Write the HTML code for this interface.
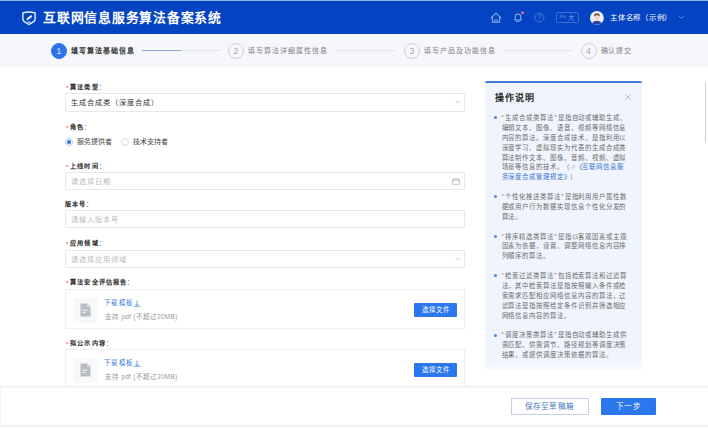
<!DOCTYPE html>
<html lang="zh-CN">
<head>
<meta charset="utf-8">
<style>
*{box-sizing:border-box;margin:0;padding:0}
html,body{width:708px;height:429px;overflow:hidden;background:#fff;font-family:"Liberation Sans",sans-serif;color:#333}
.abs{position:absolute}
#hdr{position:absolute;left:0;top:0;width:708px;height:34px;background:#0443c2;border-top:1px solid #8db6e6}
#hdr .title{position:absolute;left:43px;top:8.6px;font-size:12.8px;line-height:16px;color:#fff;font-weight:bold;letter-spacing:0.76px;white-space:nowrap}
#hdr .name{position:absolute;left:610px;top:12.2px;font-size:7.4px;line-height:10px;color:#fff;white-space:nowrap;letter-spacing:0.75px;font-weight:500}
#steps{position:absolute;left:0;top:34px;width:708px;height:33px;background:#f5f7fb}
.sc{position:absolute;top:8.5px;width:16px;height:16px;border-radius:50%;border:1px solid #d0d3d8;color:#a9a9a9;font-size:8.6px;line-height:14.5px;text-align:center}
.sc.on{background:#2d74ea;border-color:#2d74ea;color:#dfe9ff}
.sl{position:absolute;top:11.6px;font-size:7px;line-height:10px;color:#808080;white-space:nowrap;letter-spacing:0.95px;font-weight:500}
.sl.on{color:#333;font-weight:bold}
.line{position:absolute;top:16px;height:1px;background:#e3e5e9}
.lbl{position:absolute;left:65px;font-size:6.2px;line-height:9px;color:#2a2a2a;font-weight:bold;white-space:nowrap;letter-spacing:1.08px;margin-top:-0.5px}
.lbl u{text-decoration:none;font-weight:normal;color:#555}
.lbl i{font-style:normal;color:#e0403a;font-weight:normal;margin-right:0.8px;margin-left:1px;position:relative;top:1px}
.inp{position:absolute;left:65px;width:400px;height:18px;border:1px solid #e6e8eb;border-radius:1px;font-size:7.2px;line-height:17px;padding-left:4.6px;color:#333;white-space:nowrap;letter-spacing:1.05px}
.inp.ph{color:#bbb}
.inp svg{position:absolute}
.radio{position:absolute;top:137.7px;width:8px;height:8px;border-radius:50%;border:1px solid #d8dade;background:#fff}
.radio.on{border-color:#a9c6ef}
.radio.on:after{content:"";position:absolute;left:1px;top:1px;width:4px;height:4px;border-radius:50%;background:#3a70d8}
.rt{position:absolute;top:137px;font-size:7px;line-height:9px;color:#444;white-space:nowrap}
.up{position:absolute;left:65px;width:400px;border:1px solid #eceef0;overflow:hidden}
.up .ib{position:absolute;left:7px;top:8px;width:24px;height:25px;background:#f7f8fa}
.up .dl{position:absolute;left:38.2px;top:9px;font-size:6.4px;line-height:8px;color:#3b7de0;white-space:nowrap;letter-spacing:1.2px}
.up .sp{position:absolute;left:39px;top:23px;font-size:6.4px;line-height:8px;color:#999;white-space:nowrap;letter-spacing:0.3px}
.up .sp .c{letter-spacing:1.15px}
.up .btn{left:348px;top:12.5px;width:43px;height:14.5px;font-size:6.4px;line-height:14.5px;letter-spacing:1.05px;text-indent:1px}
.btn{position:absolute;background:#2b78ee;color:#fff;text-align:center;border-radius:1px;white-space:nowrap}
#help{position:absolute;left:485px;top:81px;width:157px;height:287.5px;background:linear-gradient(#f0f5fd 97%,#f6f9fe);border-top:2px solid #3e7ad6;border-radius:2px 2px 0 0}
#help .ht{position:absolute;left:9.8px;top:9px;font-size:9px;line-height:12px;font-weight:bold;color:#2e2e2e;white-space:nowrap;letter-spacing:1px}
#help ul{position:absolute;left:0;top:30px;list-style:none}
#help li{position:relative;padding-left:16.5px;width:150px;font-size:6.4px;line-height:9.88px;color:#6b6b6b;margin-bottom:9.88px;white-space:nowrap;letter-spacing:0.94px}
#help b{font-weight:normal}
#help .ql{margin-right:0.6px;margin-left:0px}
#help .qr{margin-left:0.6px;margin-right:0.2px}
#help li:before{content:"";position:absolute;left:9.2px;top:3.3px;width:3.2px;height:3.2px;border-radius:50%;background:#4a87e2}
#help a{color:#3a73d0;text-decoration:none}
#foot{position:absolute;left:0;top:386px;width:708px;height:43px;background:#fff;border-top:1px solid #ebedf0;box-shadow:0 2px 2px -1px #f6f6f6 inset}
#foot .b1{position:absolute;left:510.5px;top:10.5px;width:78px;height:17px;border:1px solid #c3cfe2;color:#4677c4;font-size:7.6px;line-height:15px;text-align:center;letter-spacing:0.3px;font-weight:500}
#foot .b2{left:601px;top:10.5px;width:55px;height:17.2px;font-size:7.6px;line-height:17.2px;letter-spacing:0.3px}
#foot .bl{position:absolute;left:0;top:37px;width:708px;height:3px;background:linear-gradient(#fdfdfd,#f5f5f5 60%,#e9e9e9)}
#foot .bl2{position:absolute;left:0;top:0;width:1px;height:39px;background:#f3f3f3}
#sb{position:absolute;left:704.5px;top:82px;width:1.6px;height:61px;background:#cfd1d4;border-radius:1px}
</style>
</head>
<body>
<div id="hdr">
  <svg class="abs" style="left:21px;top:9px" width="16" height="16" viewBox="0 0 16 16">
    <path d="M1.9 2.9 Q8 1.2 14.1 2.9 V9.6 Q14.1 11 11.6 12.3 L8 14.5 L4.4 12.3 Q1.9 11 1.9 9.6 Z" fill="none" stroke="#eef4ff" stroke-width="1.35" stroke-linejoin="round"/>
    <path d="M6.5 12 H9.5" stroke="#eef4ff" stroke-width="1"/>
    <path d="M6.6 9 L10 6.3" stroke="#e6f5ec" stroke-width="2.2" stroke-linecap="round"/>
  </svg>
  <div class="title">互联网信息服务算法备案系统</div>
  <svg class="abs" style="left:490px;top:10.8px" width="12" height="11" viewBox="0 0 12 11">
    <path d="M1 5.8 L6 1.2 L11 5.8 M2.4 4.6 V10.2 H9.6 V4.6" fill="none" stroke="#86adec" stroke-width="1.05" stroke-linejoin="round" stroke-linecap="round"/>
    <path d="M4.8 10.2 V7.8 H7.2 V10.2" fill="none" stroke="#86adec" stroke-width="0.9"/>
  </svg>
  <svg class="abs" style="left:512px;top:9.8px" width="14" height="12" viewBox="0 0 14 12">
    <path d="M2.5 9 H9.5 M3.3 9 V5.8 Q3.3 3 6 3 Q8.7 3 8.7 5.8 V9 M4.9 10.4 H7.1" fill="none" stroke="#86adec" stroke-width="1.05" stroke-linejoin="round" stroke-linecap="round"/>
    <circle cx="10.5" cy="1.7" r="1.5" fill="#d96b9a"/>
  </svg>
  <svg class="abs" style="left:534px;top:11px" width="11" height="11" viewBox="0 0 11 11">
    <circle cx="5.5" cy="5.5" r="4.4" fill="none" stroke="#4c7fd8" stroke-width="0.9"/>
    <path d="M4.1 4.3 Q4.1 2.9 5.5 2.9 Q6.9 2.9 6.9 4.2 Q6.9 5 5.5 5.6 V6.6" fill="none" stroke="#4c7fd8" stroke-width="0.9"/>
    <circle cx="5.5" cy="8" r="0.5" fill="#4c7fd8"/>
  </svg>
  <div class="abs" style="left:556px;top:11.3px;width:22.5px;height:11.2px;border:1px solid #3570d4;border-radius:1.5px"></div>
  <div class="abs" style="left:559.6px;top:12.4px;font-size:4.6px;line-height:8px;color:#4a80d8;font-weight:bold;white-space:nowrap">Aa</div>
  <div class="abs" style="left:568px;top:11.9px;font-size:6.5px;line-height:9px;color:#6f9fe8;font-weight:500;white-space:nowrap">大</div>
  <svg class="abs" style="left:590.2px;top:9.9px" width="13.8" height="13.8" viewBox="0 0 14 14">
    <defs><clipPath id="av"><circle cx="7" cy="7" r="7"/></clipPath></defs>
    <circle cx="7" cy="7" r="7" fill="#e9f5fb"/>
    <g clip-path="url(#av)">
      <path d="M1.5 14 Q2 10 7 9.8 Q12 10 12.5 14 Z" fill="#2d3fa6"/>
      <ellipse cx="7" cy="6.3" rx="3" ry="3.4" fill="#f6d7cf"/>
      <path d="M3.9 5.5 Q4 2.4 7 2.4 Q10 2.4 10.1 5.5 Q9 4.1 7 4.2 Q5 4.1 3.9 5.5 Z" fill="#6b4a3e"/>
    </g>
  </svg>
  <div class="name">主体名称（示例）</div>
  <svg class="abs" style="left:678px;top:14.2px" width="7" height="5" viewBox="0 0 7 5">
    <path d="M1 1 L3.5 3.6 L6 1" fill="none" stroke="#6b95de" stroke-width="0.9"/>
  </svg>
</div>
<div id="steps">
  <div class="sc on" style="left:51px">1</div>
  <div class="sl on" style="left:71px">填写算法基础信息</div>
  <div class="line" style="left:142px;width:79px"></div>
  <div class="line" style="left:142px;width:39px;background:#8fa9dd"></div>
  <div class="sc" style="left:228px">2</div>
  <div class="sl" style="left:248px">填写算法详细属性信息</div>
  <div class="line" style="left:334px;width:61px"></div>
  <div class="sc" style="left:404px">3</div>
  <div class="sl" style="left:424px">填写产品及功能信息</div>
  <div class="line" style="left:504px;width:68px"></div>
  <div class="sc" style="left:580.5px">4</div>
  <div class="sl" style="left:600.5px">确认提交</div>
</div>

<div class="lbl" style="top:82px"><i>*</i>算法类型<u>：</u></div>
<div class="inp" style="top:93px;height:18.6px">生成合成类（深度合成）
  <svg style="left:389px;top:6px" width="6" height="4" viewBox="0 0 6 4"><path d="M0.6 0.8 L3 3.1 L5.4 0.8" fill="none" stroke="#c4c6ca" stroke-width="0.8"/></svg>
</div>
<div class="lbl" style="top:122px"><i>*</i>角色<u>：</u></div>
<div class="radio on" style="left:65px"></div>
<div class="rt" style="left:76.5px">服务提供者</div>
<div class="radio" style="left:121px"></div>
<div class="rt" style="left:132.5px">技术支持者</div>
<div class="lbl" style="top:161px"><i>*</i>上线时间<u>：</u></div>
<div class="inp ph" style="top:172px">请选择日期
  <svg style="left:386px;top:4.6px" width="8" height="7" viewBox="0 0 8 7"><rect x="0.6" y="1.1" width="6.8" height="5.2" rx="0.6" fill="none" stroke="#b4b6ba" stroke-width="0.8"/><path d="M0.6 2.6 H7.4 M2.3 0.2 V1.6 M5.7 0.2 V1.6" stroke="#b4b6ba" stroke-width="0.8"/></svg>
</div>
<div class="lbl" style="top:199.5px">版本号<u>：</u></div>
<div class="inp ph" style="top:210.2px">请输入版本号</div>
<div class="lbl" style="top:238.5px"><i>*</i>应用领域<u>：</u></div>
<div class="inp ph" style="top:250px">请选择应用领域
  <svg style="left:389px;top:6px" width="6" height="4" viewBox="0 0 6 4"><path d="M0.6 0.8 L3 3.1 L5.4 0.8" fill="none" stroke="#c4c6ca" stroke-width="0.8"/></svg>
</div>
<div class="lbl" style="top:277.5px"><i>*</i>算法安全评估报告<u>：</u></div>
<div class="up" style="top:289px;height:40px">
  <div class="ib"><svg class="abs" style="left:6.5px;top:5px" width="11" height="14" viewBox="0 0 11 14"><path d="M0.5 0.5 H7.5 L10.5 3.5 V13.5 H0.5 Z" fill="#b9bbc5"/><path d="M7.3 0.5 V3.7 H10.5" fill="#e4e5ea"/><path d="M2.3 7.2 H7.6 M2.3 9.4 H5.6" stroke="#fff" stroke-width="0.9"/></svg></div>
  <div class="dl">下载模板</div><svg class="abs" style="left:66.8px;top:10.3px" width="8" height="7" viewBox="0 0 8 7"><path d="M4 0.6 V5.6 M2.6 4.2 L4 5.6 L5.4 4.2 M0.6 6.3 H7.4" fill="none" stroke="#4a86e0" stroke-width="0.8"/></svg>
  <div class="sp"><span class="c">支持</span> pdf (<span class="c">不超过</span>20MB)</div>
  <div class="btn">选择文件</div>
</div>
<div class="lbl" style="top:338.5px"><i>*</i>拟公示内容<u>：</u></div>
<div class="up" style="top:349px;height:40px">
  <div class="ib"><svg class="abs" style="left:6.5px;top:5px" width="11" height="14" viewBox="0 0 11 14"><path d="M0.5 0.5 H7.5 L10.5 3.5 V13.5 H0.5 Z" fill="#b9bbc5"/><path d="M7.3 0.5 V3.7 H10.5" fill="#e4e5ea"/><path d="M2.3 7.2 H7.6 M2.3 9.4 H5.6" stroke="#fff" stroke-width="0.9"/></svg></div>
  <div class="dl">下载模板</div><svg class="abs" style="left:66.8px;top:10.3px" width="8" height="7" viewBox="0 0 8 7"><path d="M4 0.6 V5.6 M2.6 4.2 L4 5.6 L5.4 4.2 M0.6 6.3 H7.4" fill="none" stroke="#4a86e0" stroke-width="0.8"/></svg>
  <div class="sp"><span class="c">支持</span> pdf (<span class="c">不超过</span>20MB)</div>
  <div class="btn">选择文件</div>
</div>

<div id="help">
  <div class="ht">操作说明</div>
  <svg class="abs" style="left:139px;top:9.5px" width="8" height="8" viewBox="0 0 8 8"><path d="M1 1 L7 7 M7 1 L1 7" stroke="#b5b9c2" stroke-width="0.8"/></svg>
  <ul>
    <li><b class="ql">“</b>生成合成类算法<b class="qr">”</b>是指自动或辅助生成、<br>编辑文本、图像、语音、视频等网络信息<br>内容的算法。深度合成技术，是指利用以<br>深度学习、虚拟现实为代表的生成合成类<br>算法制作文本、图像、音频、视频、虚拟<br>场景等信息的技术。<b style="margin-left:2px">（</b><a><svg width="4.4" height="4.4" viewBox="0 0 6 6" style="margin:0 0.4px 0 0.8px;vertical-align:0.3px"><path d="M2.6 1.4 L3.6 0.6 Q4.6 0 5.3 0.7 Q6 1.5 5.3 2.3 L4.4 3.2 M3.4 4.6 L2.4 5.4 Q1.4 6 0.7 5.3 Q0 4.5 0.7 3.7 L1.6 2.8 M2 4 L4 2" fill="none" stroke="#9bb6e0" stroke-width="0.9"/></svg>《互联网信息服<br>务深度合成管理规定》</a><b style="margin-left:2.2px">）</b></li>
    <li><b class="ql">“</b>个性化推送类算法<b class="qr">”</b>是指利用用户属性数<br>据或用户行为数据实现信息个性化分发的<br>算法。</li>
    <li><b class="ql">“</b>排序精选类算法<b class="qr">”</b>是指以客观因素或主观<br>因素为依据，设置、调整网络信息内容排<br>列顺序的算法。</li>
    <li><b class="ql">“</b>检索过滤类算法<b class="qr">”</b>包括检索算法和过滤算<br>法，其中检索算法是指按照输入条件或检<br>索需求匹配相应网络信息内容的算法，过<br>滤算法是指按照给定条件识别并筛选相应<br>网络信息内容的算法。</li>
    <li><b class="ql">“</b>调度决策类算法<b class="qr">”</b>是指自动或辅助生成供<br>需匹配、供需调节、路径规划等调度决策<br>结果，或提供调度决策依据的算法。</li>
  </ul>
</div>
<div id="sb"></div>

<div id="foot">
  <div class="b1">保存至草稿箱</div>
  <div class="btn b2">下一步</div>
  <div class="bl"></div><div class="bl2"></div>
</div>
</body>
</html>
